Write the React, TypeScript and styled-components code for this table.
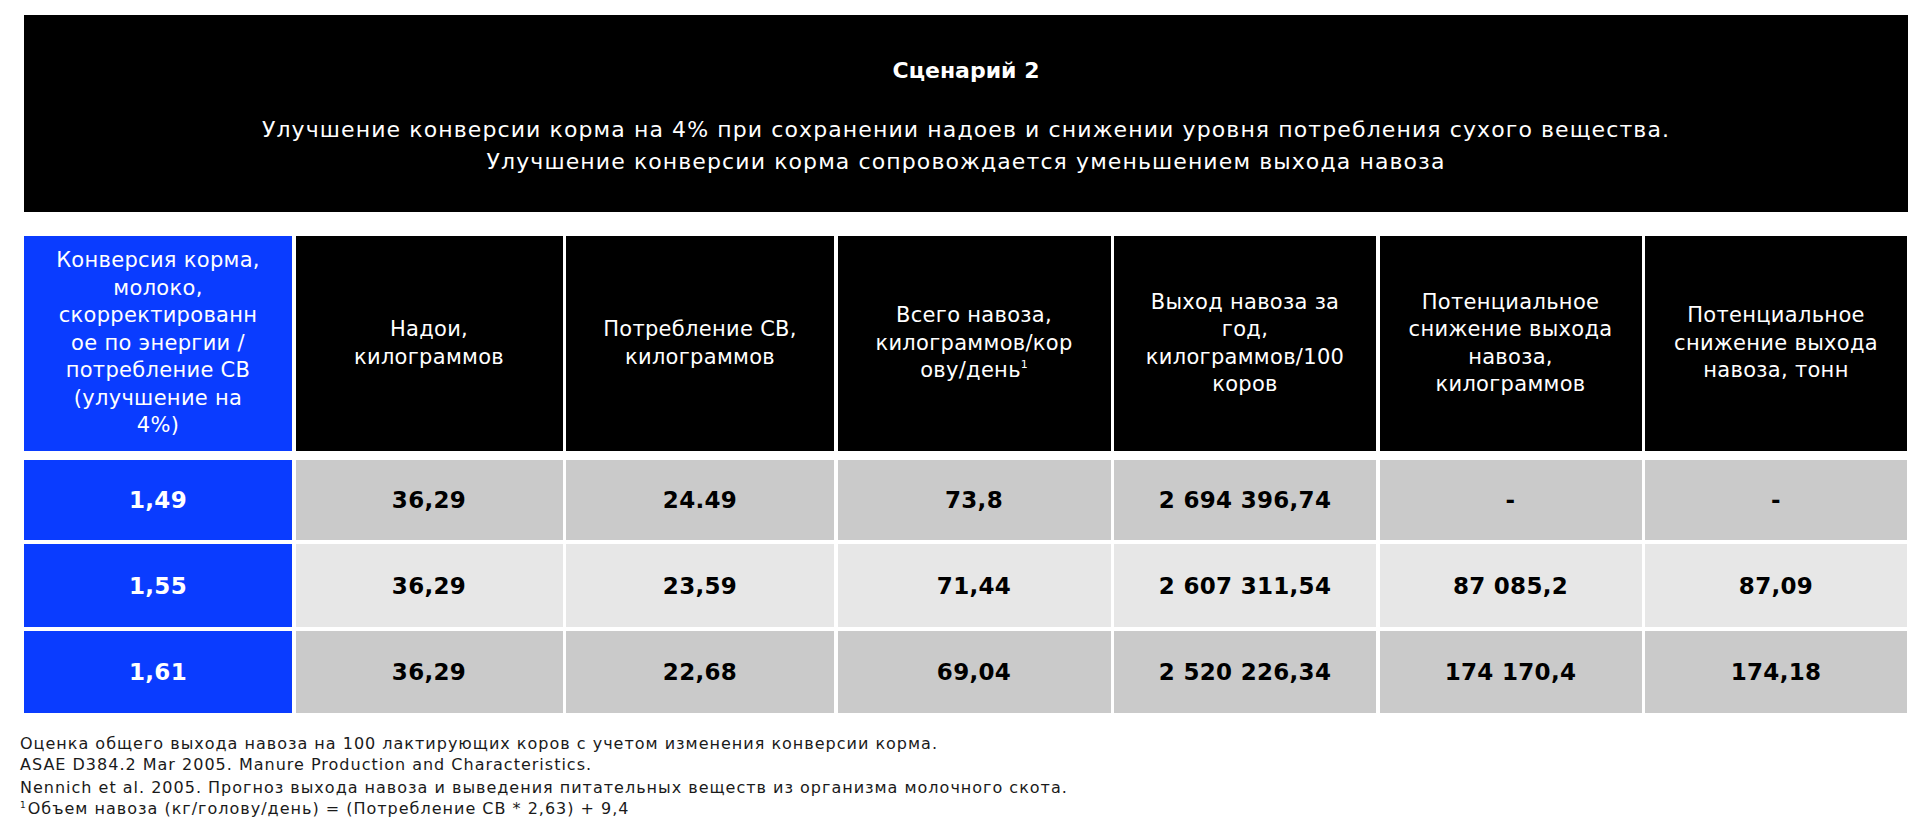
import React from "react";
import styled, { createGlobalStyle } from "styled-components";

const Global = createGlobalStyle`
  html, body { margin: 0; padding: 0; background: #ffffff; }
  body { font-family: "DejaVu Sans", "Noto Sans", sans-serif; color: #000; }
`;

const Page = styled.div`
  width: 1920px;
  height: 830px;
  box-sizing: border-box;
  padding: 15px 12px 0 24px;
  display: flex;
  flex-direction: column;
`;

const Banner = styled.div`
  height: 197px;
  background: #000;
  color: #fff;
  display: flex;
  flex-direction: column;
  align-items: center;
  text-align: center;
  padding-top: 43px;
  box-sizing: border-box;
`;

const Title = styled.div`
  font-size: 22px;
  font-weight: bold;
  line-height: 26px;
`;

const Subtitle = styled.div`
  margin-top: 30px;
  font-size: 22px;
  letter-spacing: 1.1px;
  line-height: 32px;
`;

const Table = styled.div`
  margin-top: 24px;
  display: grid;
  grid-template-columns: 268px 267px 268px 273px 262px 262px 262px;
  grid-template-rows: 220px 80px 83px 82px;
  column-gap: 3.5px;
  row-gap: 4px;
`;

const HeadCell = styled.div<{ $accent?: boolean }>`
  background: ${(p) => (p.$accent ? "#0a3cff" : "#000")};
  color: #fff;
  display: flex;
  align-items: center;
  justify-content: center;
  text-align: center;
  font-size: 21px;
  letter-spacing: 0.3px;
  line-height: 27.5px;
  padding: 0 6px;
  box-sizing: border-box;
  margin-bottom: 5px;
  sup { font-size: 11px; line-height: 0; vertical-align: 9px; letter-spacing: 0; }
`;

const Cell = styled.div<{ $tone: "blue" | "dark" | "light" }>`
  background: ${(p) =>
    p.$tone === "blue" ? "#0a3cff" : p.$tone === "dark" ? "#cacaca" : "#e7e7e7"};
  color: ${(p) => (p.$tone === "blue" ? "#fff" : "#000")};
  display: flex;
  align-items: center;
  justify-content: center;
  font-size: 23px;
  font-weight: bold;
  letter-spacing: 0.3px;
`;

const Notes = styled.div`
  margin-top: 20px;
  margin-left: -4px;
  font-size: 16px;
  letter-spacing: 1px;
  line-height: 21px;
  color: #1a1a1a;
  sup { font-size: 9px; line-height: 0; vertical-align: 6px; margin-right: 2px; letter-spacing: 0; }
`;

const Note = styled.div<{ $gap?: boolean }>`
  margin-top: ${(p) => (p.$gap ? "2px" : "0")};
`;

const headers: React.ReactNode[] = [
  <>Конверсия корма,<br />молоко,<br />скорректированн<br />ое по энергии /<br />потребление СВ<br />(улучшение на<br />4%)</>,
  <>Надои,<br />килограммов</>,
  <>Потребление СВ,<br />килограммов</>,
  <>Всего навоза,<br />килограммов/кор<br />ову/день<sup>1</sup></>,
  <>Выход навоза за<br />год,<br />килограммов/100<br />коров</>,
  <>Потенциальное<br />снижение выхода<br />навоза,<br />килограммов</>,
  <>Потенциальное<br />снижение выхода<br />навоза, тонн</>,
];

const rows: { tone: "dark" | "light"; values: string[] }[] = [
  { tone: "dark", values: ["1,49", "36,29", "24.49", "73,8", "2 694 396,74", "-", "-"] },
  { tone: "light", values: ["1,55", "36,29", "23,59", "71,44", "2 607 311,54", "87 085,2", "87,09"] },
  { tone: "dark", values: ["1,61", "36,29", "22,68", "69,04", "2 520 226,34", "174 170,4", "174,18"] },
];

export default function App() {
  return (
    <Page>
      <Global />
      <Banner>
        <Title>Сценарий 2</Title>
        <Subtitle>
          Улучшение конверсии корма на 4% при сохранении надоев и снижении уровня потребления сухого вещества.
          <br />
          Улучшение конверсии корма сопровождается уменьшением выхода навоза
        </Subtitle>
      </Banner>
      <Table>
        {headers.map((h, i) => (
          <HeadCell key={i} $accent={i === 0}>
            <div>{h}</div>
          </HeadCell>
        ))}
        {rows.map((r, ri) =>
          r.values.map((v, ci) => (
            <Cell key={`${ri}-${ci}`} $tone={ci === 0 ? "blue" : r.tone}>
              {v}
            </Cell>
          ))
        )}
      </Table>
      <Notes>
        <Note>Оценка общего выхода навоза на 100 лактирующих коров с учетом изменения конверсии корма.</Note>
        <Note>ASAE D384.2 Mar 2005. Manure Production and Characteristics.</Note>
        <Note $gap>Nennich et al. 2005. Прогноз выхода навоза и выведения питательных веществ из организма молочного скота.</Note>
        <Note>
          <sup>1</sup>Объем навоза (кг/голову/день) = (Потребление СВ * 2,63) + 9,4
        </Note>
      </Notes>
    </Page>
  );
}
